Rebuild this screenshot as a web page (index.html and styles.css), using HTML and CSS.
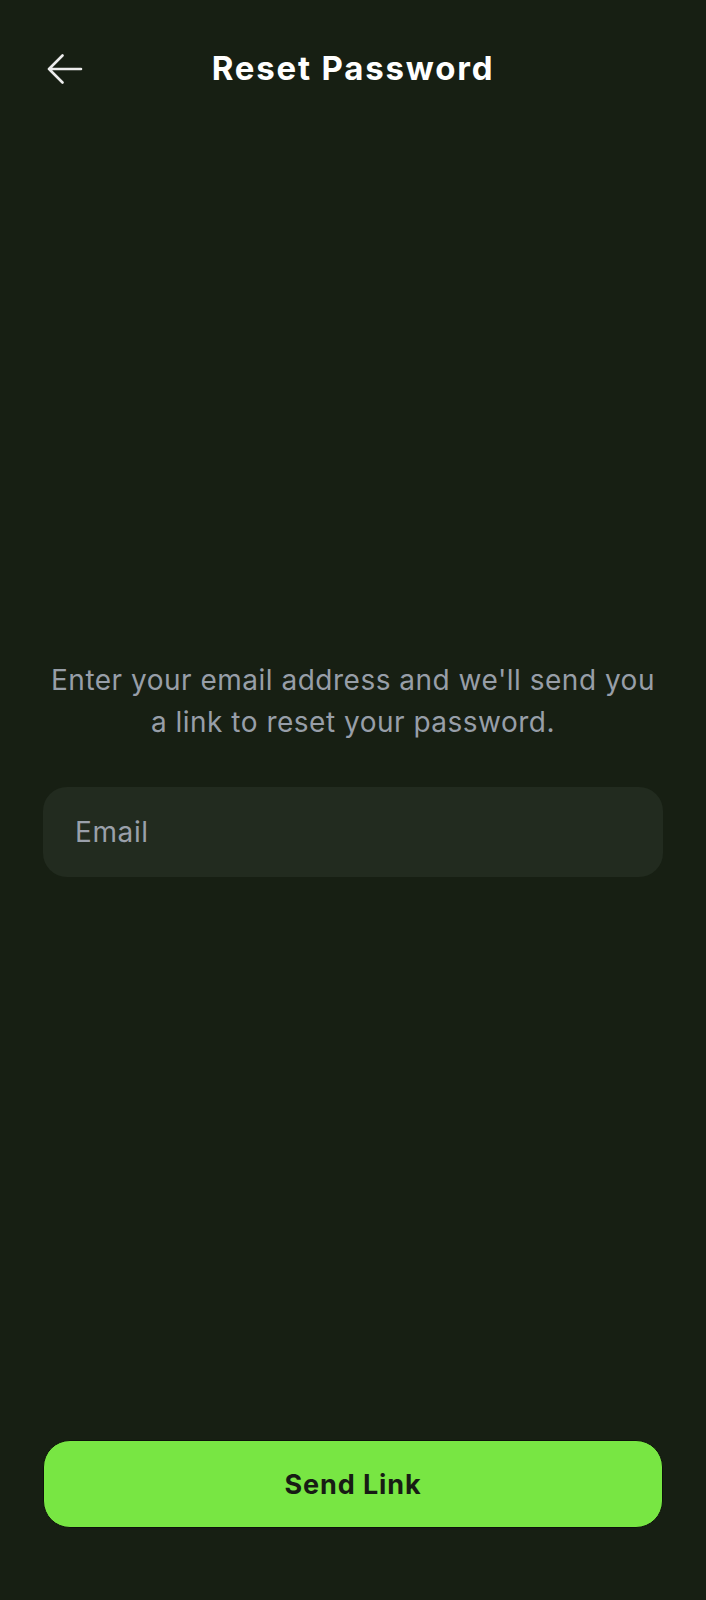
FILE: index.html
```html
<!DOCTYPE html>
<html lang="en">
<head>
<meta charset="utf-8">
<title>Reset Password</title>
<link rel="stylesheet" href="styles.css">
</head>
<body>
<div class="screen">
  <header class="header">
    <button class="back" aria-label="Back">
      <svg width="36" height="30" viewBox="0 0 36 30" fill="none" stroke="#ececec" stroke-width="2.6" stroke-linecap="round" stroke-linejoin="round">
        <path d="M2 15 H34 M2 15 L15.5 1.5 M2 15 L15.5 28.5"/>
      </svg>
    </button>
    <h1 class="title">Reset Password</h1>
  </header>
  <main class="main">
    <p class="intro">Enter your email address and we'll send you a link to reset your password.</p>
    <div class="field">
      <input class="input" type="email" placeholder="Email">
    </div>
  </main>
  <footer class="footer">
    <button class="primary">Send Link</button>
  </footer>
</div>
</body>
</html>
```
FILE: styles.css
```css
* { box-sizing: border-box; }
html, body {
  margin: 0;
  padding: 0;
  background: #171f13;
}
body {
  font-family: Inter, "Noto Sans", sans-serif;
  color: #ffffff;
}
.screen {
  display: flex;
  flex-direction: column;
  min-height: 1600px;
  padding: 0 43px 72px;
}
.header {
  position: relative;
  height: 136px;
  display: flex;
  align-items: center;
  justify-content: center;
}
.back {
  position: absolute;
  left: 0;
  top: 47px;
  width: 44px;
  height: 44px;
  padding: 0;
  border: 0;
  background: transparent;
  display: flex;
  align-items: center;
  justify-content: center;
  cursor: pointer;
}
.title {
  margin: 0;
  font-size: 33px;
  font-weight: 700;
  line-height: 40px;
  letter-spacing: 1.8px;
  color: #ffffff;
}
.main {
  flex: 1;
  display: flex;
  flex-direction: column;
  justify-content: center;
  padding-bottom: 40px;
  gap: 44px;
}
.intro {
  margin: 0;
  text-align: center;
  font-size: 28px;
  line-height: 42px;
  color: #979ea8;
  letter-spacing: 0.5px;
}
.field {
  height: 90px;
  border-radius: 24px;
  background: #222b1f;
  display: flex;
  align-items: center;
  padding: 0 32px;
}
.input {
  flex: 1;
  border: 0;
  outline: none;
  background: transparent;
  font-family: Inter, "Noto Sans", sans-serif;
  font-size: 28px;
  letter-spacing: 0.6px;
  color: #e8e8e8;
  padding: 0;
}
.input::placeholder {
  color: #9aa0aa;
}
.footer {
  display: flex;
}
.primary {
  flex: 1;
  height: 88px;
  border: 1px solid #0d120a;
  border-radius: 27px;
  background: #78e643;
  color: #171c14;
  font-family: Inter, "Noto Sans", sans-serif;
  font-size: 27px;
  font-weight: 700;
  letter-spacing: 0.9px;
  cursor: pointer;
}
```
